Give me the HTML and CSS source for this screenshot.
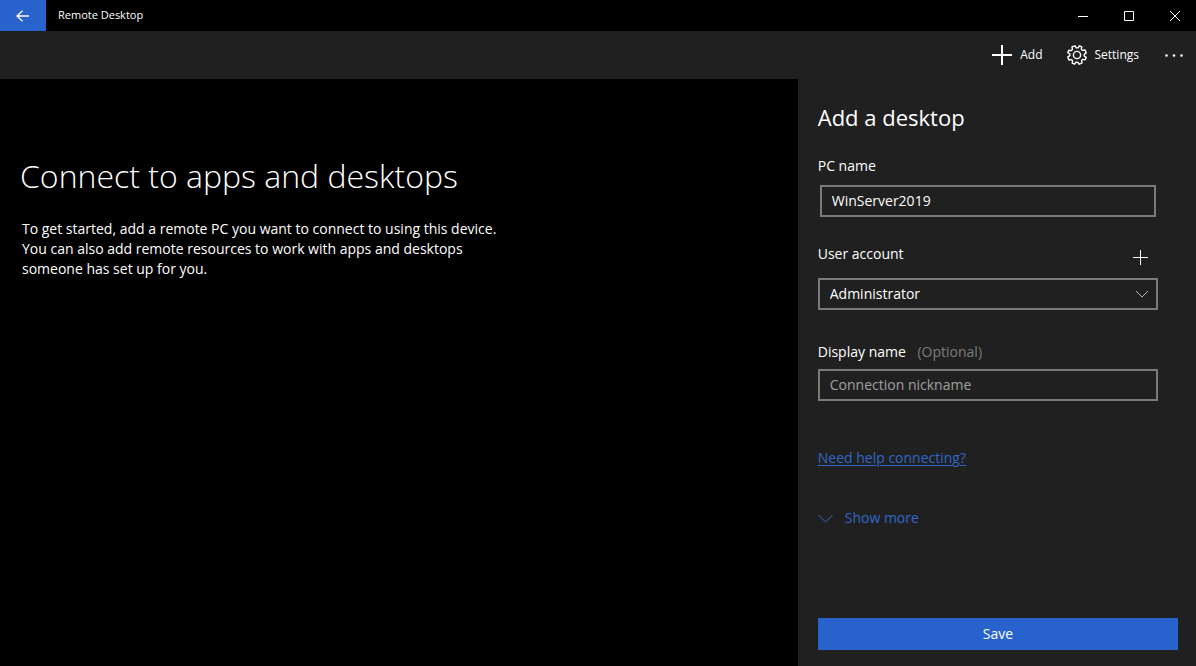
FILE: index.html
```html
<!DOCTYPE html>
<html lang="en">
<head>
<meta charset="utf-8">
<meta name="viewport" content="width=device-width, initial-scale=1">
<title>Remote Desktop</title>
<link rel="stylesheet" href="styles.css">
</head>
<body>
<div class="window">
  <header class="titlebar">
    <button class="back" type="button" aria-label="Back">
      <svg width="14" height="12" viewBox="0 0 14 12"><path d="M6.500 .7 1 6l5.500 5.300M1 6h12"/></svg>
    </button>
    <span class="app-name">Remote Desktop</span>
    <button class="caption" type="button" aria-label="Minimize">
      <svg width="10" height="10" viewBox="0 0 10 10"><path d="M0 5.500h10"/></svg>
    </button>
    <button class="caption" type="button" aria-label="Maximize">
      <svg width="10" height="10" viewBox="0 0 10 10"><path d="M.5.500h9v9h-9z"/></svg>
    </button>
    <button class="caption" type="button" aria-label="Close">
      <svg width="10" height="10" viewBox="0 0 10 10"><path d="M0 0l10 10M10 0 0 10"/></svg>
    </button>
  </header>
  <nav class="toolbar" aria-label="Commands">
    <button class="command" type="button">
      <svg class="add-icon" width="20" height="20" viewBox="0 0 20 20"><path d="M10 0v20M0 10h20"/></svg>
      Add
    </button>
    <button class="command" type="button">
      <svg class="gear" width="20" height="20" viewBox="0 0 20 20"><path transform="rotate(22.5 10 10)" d="M8.700 .6h2.600l.5 2.400 1.600.6 2.100-1.300 2.200 2.200-1.300 2.100.6 1.600 2.400.5v2.600l-2.400.5-.6 1.600 1.300 2.100-2.200 2.200-2.100-1.300-1.600.6-.5 2.400h-2.600l-.5-2.400-1.600-.6-2.100 1.300-2.200-2.200 1.300-2.100-.6-1.600-2.400-.5v-2.600l2.400-.5.6-1.600-1.300-2.100 2.200-2.200 2.100 1.300 1.600-.6z"/><circle cx="10" cy="10" r="3.600"/></svg>
      Settings
    </button>
    <button class="more" type="button" aria-label="More">
      <svg width="18" height="4" viewBox="0 0 18 4"><g class="dots"><circle cx="1.500" cy="2.500" r="1.300"/><circle cx="9" cy="2.500" r="1.300"/><circle cx="16.500" cy="2.500" r="1.300"/></g></svg>
    </button>
  </nav>
  <div class="content">
    <main class="welcome">
      <h1>Connect to apps and desktops</h1>
      <p>To get started, add a remote PC you want to connect to using this device. You can also add remote resources to work with apps and desktops someone has set up for you.</p>
    </main>
    <aside class="panel">
      <form class="form">
        <h2>Add a desktop</h2>
        <div class="field pc">
          <label for="pc">PC name</label>
          <input class="box" id="pc" type="text" value="WinServer2019">
        </div>
        <div class="field account">
          <div class="label-row">
            <label for="account">User account</label>
            <button class="add-account" type="button" aria-label="Add user account">
              <svg width="15" height="15" viewBox="0 0 15 15"><path d="M7.500 0v15M0 7.500h15"/></svg>
            </button>
          </div>
          <div class="select">
            <select class="box" id="account"><option>Administrator</option></select>
            <svg class="arrow" width="14" height="8" viewBox="0 0 14 8"><path d="M1 1l6 6 6-6"/></svg>
          </div>
        </div>
        <div class="field display">
          <label for="nickname">Display name <span class="optional">(Optional)</span></label>
          <input class="box" id="nickname" type="text" placeholder="Connection nickname">
        </div>
        <a class="help" href="#help">Need help connecting?</a>
        <button class="show-more" type="button">
          <svg width="15" height="9" viewBox="0 0 15 9"><path d="M.5 1l7 7 7-7"/></svg>
          Show more
        </button>
        <button class="save" type="submit">Save</button>
      </form>
    </aside>
  </div>
</div>
</body>
</html>
```
FILE: styles.css
```css
* { box-sizing: border-box; }

body {
  margin: 0;
  background: #000;
  color: #fff;
  font: 14px/20px "Segoe UI", "Open Sans", "Noto Sans", sans-serif;
}

button, input, select { font: inherit; color: inherit; }
button { padding: 0; border: 0; background: none; }
svg { display: block; flex: none; fill: none; stroke: currentColor; stroke-width: 1; }

.window { display: flex; flex-direction: column; min-height: 100vh; }

.titlebar { display: flex; height: 31px; }
.back { display: grid; place-items: center; width: 46px; background: #2863cd; }
.back svg { stroke-width: 1.3; }
.app-name { flex: 1; padding-left: 12px; font-size: 11px; line-height: 30px; }
.caption { display: grid; place-items: center; width: 46px; }
.caption:last-child { width: 44px; padding-left: 2px; }

.toolbar { display: flex; justify-content: flex-end; height: 48px; background: #202020; }
.command { display: flex; align-items: center; gap: 8px; margin-right: 24px; font-size: 12px; }
.add-icon { stroke-width: 2; }
.gear { stroke-width: 1.4; stroke-linejoin: round; }
.more { display: grid; place-items: center; width: 44px; margin-left: -11px; }
.dots { fill: currentColor; stroke: none; }

.content { display: grid; grid-template-columns: 1fr minmax(320px, 33.3%); flex: 1; }
.welcome { padding: 76px 20px 20px; }
.panel { display: flex; padding: 20px 18px 16px 20px; background: #202020; }

h1, h2 { margin: 0; }
h1 { font-size: 32px; font-weight: 300; line-height: 42px; }
h2 { font-size: 22px; font-weight: 400; line-height: 36px; }
.welcome p { max-width: 500px; margin: 22px 0 0 2px; }

.form { display: flex; flex: 1; flex-direction: column; align-items: flex-start; }
.field { width: 100%; padding-right: 20px; }
.field label { display: block; }
.label-row { display: flex; justify-content: space-between; height: 37px; padding-top: 3px; }
.add-account { display: grid; place-items: center; width: 35px; height: 26px; }

.box {
  display: block;
  width: 100%;
  height: 32px;
  padding: 0 10px;
  border: 2px solid #7a7a7a;
  border-radius: 0;
  background: #202020;
}
input.box { padding-bottom: 2px; }
.box::placeholder { color: #a0a0a0; opacity: 1; }
.select { position: relative; }
select.box { appearance: none; }
.arrow { position: absolute; top: 12px; right: 9px; pointer-events: none; color: #b8b8b8; }
.optional { margin-left: 8px; color: #7c7c7c; }

.pc { margin-top: 21px; }
.pc .box { width: calc(100% - 4px); margin: 9px 2px 0; }
.account { margin: 24px 0 32px; }
.display .box { margin-top: 7px; }

.help { margin-top: 47px; color: #3068c8; text-underline-offset: 2px; }
.show-more { display: flex; align-items: center; gap: 12px; margin-top: 40px; color: #3068c8; }
.save { width: 100%; height: 32px; margin-top: auto; background: #2863cd; }
```
